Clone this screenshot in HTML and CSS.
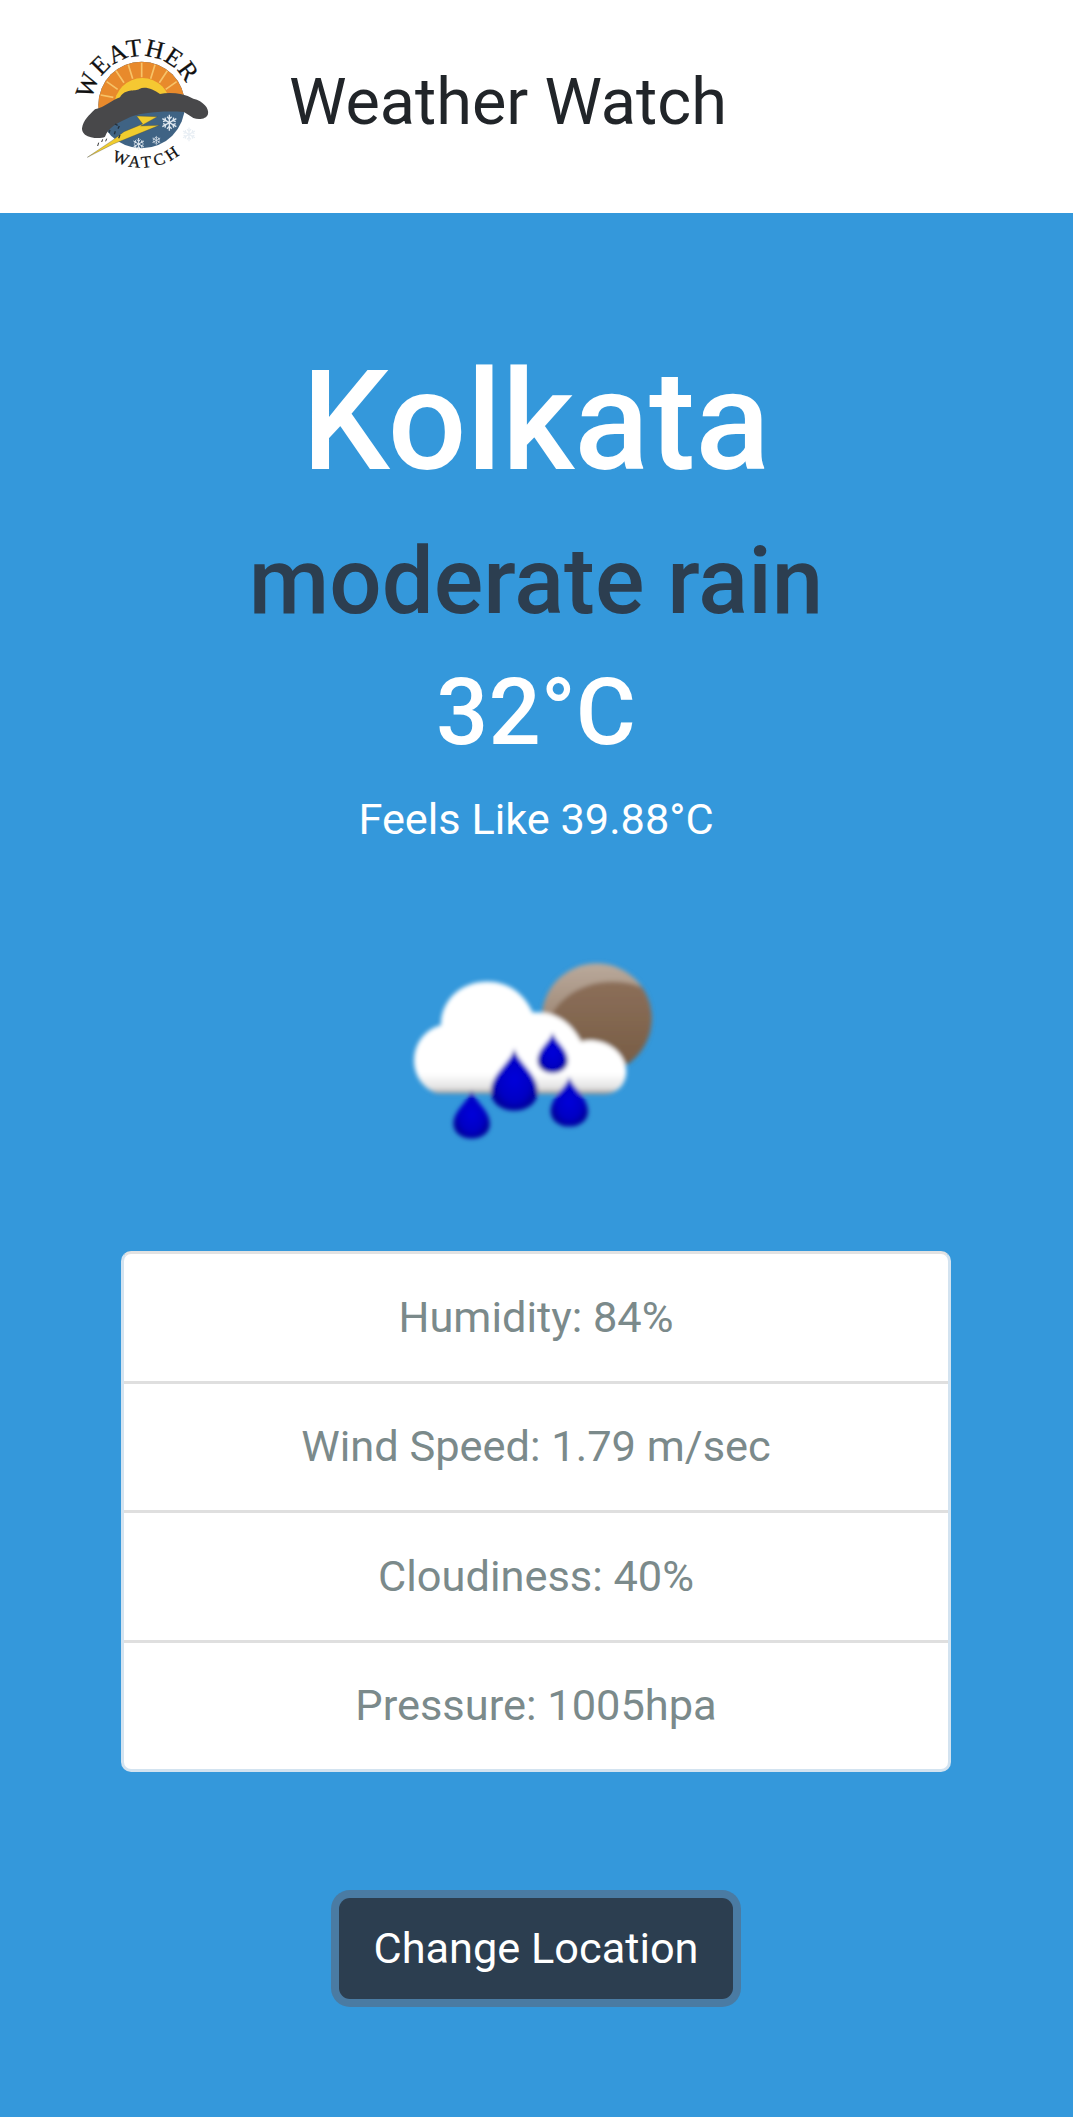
FILE: index.html
```html
<!DOCTYPE html>
<html>
    <head>
        <meta charset="utf-8">
        <title>Weather Watch</title>
        <link rel="stylesheet" href="styles.css">
    </head>
    <body>
        <nav class="navbar">
            <svg class="logo" viewBox="0 0 600 510" role="img" aria-label="Weather Watch logo">
                <defs>
                    <path id="arcTop" d="M127 240A149 149 0 0 1 424 255"/>
                    <path id="arcBottom" d="M185 420A188 188 0 0 0 463 255"/>
                    <clipPath id="discTop"><rect x="130" y="110" width="290" height="160"/></clipPath>
                    <g id="flake" stroke="#dfe8f0" stroke-width="4" fill="none">
                        <path d="M0 -24V24M-21 -12L21 12M-21 12L21 -12"/>
                        <path d="M-7 -18L0 -11L7 -18M-7 18L0 11L7 18M-19 -3L-11 -6L-13 -15M19 3L11 6L13 15M-19 3L-11 6L-13 15M19 -3L11 -6L13 -15"/>
                    </g>
                </defs>
                <circle cx="275" cy="255" r="130" fill="#3f6384"/>
                <circle cx="275" cy="255" r="130" fill="#e88a2c" clip-path="url(#discTop)"/>
                <path d="M275 128V172M235 134L248 176M315 134L302 176M198 152L222 188M352 152L328 188M170 185L203 208M380 185L347 208M152 225L190 232M398 225L360 232" stroke="#f7c368" stroke-width="5"/>
                <circle cx="277" cy="258" r="84" fill="#f5c832" clip-path="url(#discTop)"/>
                <path d="M96 325C100 300 118 285 135 268C165 262 185 240 210 232C225 205 255 215 268 207C285 198 310 208 330 222C360 216 400 220 430 236C460 243 478 265 474 282C470 298 445 300 430 294L402 276C340 272 270 276 230 296C200 310 175 322 165 350C150 358 120 354 105 344C98 338 96 332 96 325Z" fill="#48484a"/>
                <path d="M260 288L322 290L272 318L328 316L190 372L112 412L186 362L222 335L278 312Z" fill="#f0cc2e" stroke="#4a4a3a" stroke-width="1"/>
                <use href="#flake" x="358" y="308"/>
                <use href="#flake" transform="translate(266 372) scale(.75)"/>
                <use href="#flake" transform="translate(319 361) scale(.55)"/>
                <use href="#flake" transform="translate(417 343) scale(.85)" opacity=".7"/>
                <path d="M195 312l8 4M208 318l-4 8M196 334l-3 9M210 345l-4 10M180 330l-3 8" stroke="#22303c" stroke-width="4"/>
                <path d="M158 358l-3 8M146 368l-3 10M170 356l-3 8" stroke="#333" stroke-width="3"/>
                <text class="logo-text"><textPath href="#arcTop">WEATHER</textPath></text>
                <text class="logo-text logo-text-small"><textPath href="#arcBottom">WATCH</textPath></text>
            </svg>
            <span class="brand">Weather Watch</span>
        </nav>

        <main class="weather">
            <h1 class="city">Kolkata</h1>
            <h2 class="condition">moderate rain</h2>
            <h3 class="temp">32°C</h3>
            <p class="feels">Feels Like 39.88°C</p>

            <svg class="icon" viewBox="0 0 870 660" role="img" aria-label="moderate rain">
                <defs>
                    <linearGradient id="moon" x1="0" y1="0" x2="0" y2="1">
                        <stop offset="0" stop-color="#baaa9c"/>
                        <stop offset=".5" stop-color="#a08a78"/>
                        <stop offset="1" stop-color="#7d6650"/>
                    </linearGradient>
                    <linearGradient id="moonDark" x1="0" y1="0" x2="0" y2="1">
                        <stop offset="0" stop-color="#8c6f59"/>
                        <stop offset="1" stop-color="#725840"/>
                    </linearGradient>
                    <linearGradient id="cloud" x1="0" y1="0" x2="0" y2="1">
                        <stop offset="0" stop-color="#fff"/>
                        <stop offset=".82" stop-color="#fff"/>
                        <stop offset=".95" stop-color="#e2e2e2"/>
                        <stop offset="1" stop-color="#9a9088"/>
                    </linearGradient>
                    <radialGradient id="water">
                        <stop offset="0" stop-color="#0000dc"/>
                        <stop offset=".7" stop-color="#0000c4"/>
                        <stop offset="1" stop-color="#00009a"/>
                    </radialGradient>
                    <clipPath id="moonClip"><circle cx="617" cy="235" r="165"/></clipPath>
                    <filter id="soft"><feGaussianBlur stdDeviation="7"/></filter>
                    <path id="drop" d="M0 -115C8 -75 70 -40 70 15C70 50 38 72 0 72C-38 72 -70 50 -70 15C-70 -40 -8 -75 0 -115Z" fill="url(#water)"/>
                </defs>
                <g filter="url(#soft)">
                    <circle cx="617" cy="235" r="165" fill="url(#moon)"/>
                    <ellipse cx="665" cy="290" rx="200" ry="165" fill="url(#moonDark)" clip-path="url(#moonClip)"/>
                    <path d="M140 460C90 445 65 395 70 350C75 300 110 265 150 255C150 180 210 125 290 125C350 125 400 160 425 218C490 212 540 245 570 305C620 290 695 320 705 385C710 430 680 462 640 462Z" fill="url(#cloud)"/>
                    <use href="#drop" x="370" y="440"/>
                    <use href="#drop" transform="translate(485 352) scale(.65)"/>
                    <use href="#drop" transform="translate(242 540) scale(.78)"/>
                    <use href="#drop" transform="translate(535 502) scale(.8)"/>
                </g>
            </svg>

            <ul class="stats">
                <li>Humidity: 84%</li>
                <li>Wind Speed: 1.79 m/sec</li>
                <li>Cloudiness: 40%</li>
                <li>Pressure: 1005hpa</li>
            </ul>

            <button class="change-btn" type="button">Change Location</button>
        </main>
    </body>
</html>
```

FILE: styles.css
```css
html, body {
    margin: 0;
    padding: 0;
}

body {
    font-family: Roboto, "Liberation Sans", sans-serif;
    background: #3498db;
    height: 2117px;
    overflow: hidden;
}

.navbar {
    display: flex;
    align-items: center;
    gap: 39px;
    height: 213px;
    padding-left: 50px;
    box-sizing: border-box;
    background: #fff;
}

.logo {
    width: 200px;
    height: 170px;
    margin-top: -3px;
}

.logo-text {
    font-family: "Liberation Serif", serif;
    font-size: 76px;
    letter-spacing: 3px;
    fill: #111;
    stroke: #111;
    stroke-width: .8px;
}

.logo-text-small {
    font-size: 50px;
    letter-spacing: 11px;
}

.brand {
    font-size: 64.8px;
    color: #212529;
    line-height: 1;
    margin-top: -8px;
}

.weather {
    display: flex;
    flex-direction: column;
    align-items: center;
    padding-right: 1px;
    color: #fff;
}

.city, .condition, .temp {
    margin: 0;
    font-weight: 500;
    line-height: 1.2;
}

.city {
    margin-top: 126px;
    margin-bottom: 22px;
    font-size: 138.7px;
}

.condition {
    margin-bottom: 20px;
    font-size: 92.4px;
    color: #2c3e50;
}

.temp {
    font-size: 92px;
}

.feels {
    margin: 25px 0 0;
    font-size: 43.3px;
}

.icon {
    width: 290px;
    height: 220px;
    margin-top: 95px;
}

.stats {
    width: 830px;
    margin: 91.3px 0 0;
    padding: 0;
    box-sizing: border-box;
    list-style: none;
    background: #fff;
    border: 3px solid #d3e3f0;
    border-top-color: #e2e2e2;
    border-radius: 10px;
}

.stats li {
    height: 126.5px;
    display: flex;
    align-items: center;
    justify-content: center;
    font-size: 43.4px;
    color: #7b8a8b;
}

.stats li + li {
    border-top: 3px solid #dfdfdf;
}

.change-btn {
    margin-top: 126px;
    width: 394px;
    height: 101px;
    font: 400 43.3px Roboto, "Liberation Sans", sans-serif;
    color: #fff;
    background: #2c3e50;
    border: none;
    border-radius: 11px;
    box-shadow: 0 0 0 8px #4a7ba3;
}
```
